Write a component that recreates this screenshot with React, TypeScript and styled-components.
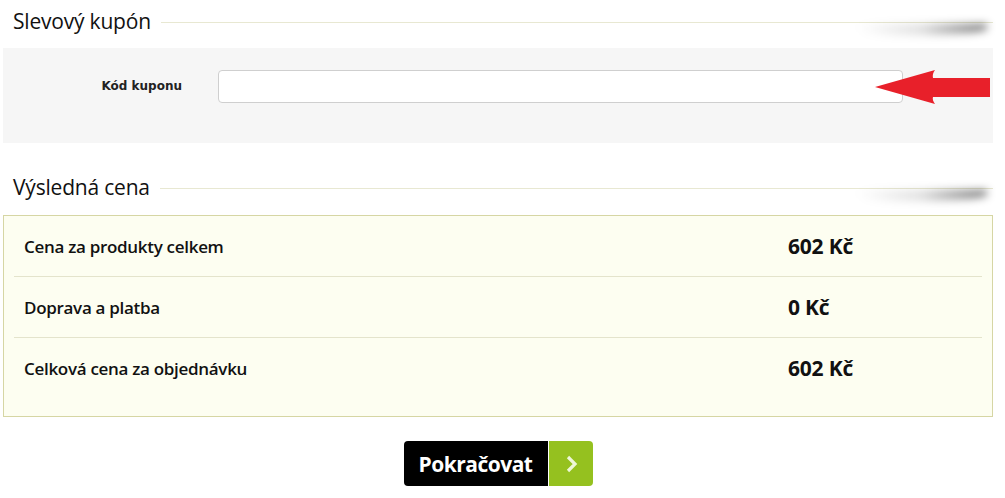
import React, { useState } from 'react'
import styled, { createGlobalStyle } from 'styled-components'

const GlobalStyle = createGlobalStyle`
  body {
    margin: 0;
    background: #ffffff;
    font-family: "Open Sans", "Liberation Sans", sans-serif;
    color: #111;
  }
`

const Wrapper = styled.div`
  width: 990px;
  padding: 0 12px 0 3px;
`

const SectionHead = styled.div<{ $top?: number }>`
  display: flex;
  align-items: center;
  gap: 10px;
  height: 42px;
  padding-left: 10px;
  margin-top: ${({ $top }) => $top || 0}px;
`

const HeadTitle = styled.h2`
  margin: 0;
  font-family: "Open Sans", sans-serif;
  font-weight: 400;
  font-size: 21px;
  letter-spacing: -0.2px;
  color: #111;
  white-space: nowrap;
`

const HeadLine = styled.div`
  position: relative;
  flex: 1;
  height: 1px;
  margin-top: 2px;
  background: #e8e8d2;

  &::after {
    content: '';
    position: absolute;
    right: 6px;
    top: 2px;
    width: 130px;
    height: 11px;
    border-radius: 0 0 60% 40%;
    background: linear-gradient(to right, rgba(0, 0, 0, 0), rgba(0, 0, 0, 0.12) 50%, rgba(0, 0, 0, 0.55));
    filter: blur(4px);
  }
`

const CouponPanel = styled.div`
  position: relative;
  margin-top: 6px;
  height: 95px;
  box-sizing: border-box;
  padding: 22px 90px 0 0;
  background: #f6f6f6;
  display: grid;
  grid-template-columns: 215px 1fr;
  align-items: start;
`

const FieldLabel = styled.label`
  justify-self: end;
  padding-right: 36px;
  line-height: 33px;
  font-family: "DejaVu Sans", Verdana, sans-serif;
  font-weight: 700;
  font-size: 12px;
  color: #222;
`

const CouponInput = styled.input`
  height: 33px;
  box-sizing: border-box;
  border: 1px solid #cfcfcf;
  border-radius: 4px;
  background: #fff;
  outline: 0;
  padding: 0 10px;
  font-size: 14px;
`

const Arrow = styled.svg`
  position: absolute;
  left: 869px;
  top: 22px;
`

const PriceBox = styled.div`
  margin-top: 7px;
  border: 1px solid #d6d6a4;
  background: #fdfef1;
  padding: 0 10px 18px;
`

const PriceRow = styled.div<{ $last?: boolean }>`
  display: grid;
  grid-template-columns: 764px 1fr;
  align-items: center;
  height: 60px;
  padding-left: 10px;
  border-bottom: ${({ $last }) => ($last ? '0' : '1px solid #e4e4cc')};
`

const RowLabel = styled.span`
  font-family: "Open Sans", sans-serif;
  font-weight: 600;
  font-size: 17px;
  letter-spacing: -0.3px;
  color: #111;
`

const RowValue = styled.span`
  font-family: "Open Sans", sans-serif;
  font-weight: 700;
  font-size: 21px;
  letter-spacing: -0.2px;
  color: #111;
`

const Actions = styled.div`
  display: flex;
  justify-content: center;
  margin-top: 24px;
`

const NextButton = styled.button`
  display: flex;
  height: 45px;
  padding: 0;
  border: 0;
  background: none;
  cursor: pointer;
  font-family: inherit;
`

const ButtonText = styled.span`
  display: flex;
  align-items: center;
  justify-content: center;
  width: 144px;
  background: #000;
  color: #fff;
  border-radius: 4px 0 0 4px;
  font-family: "Open Sans", sans-serif;
  font-weight: 700;
  font-size: 21px;
  letter-spacing: -0.5px;
`

const ButtonIcon = styled.span`
  display: flex;
  align-items: center;
  justify-content: center;
  width: 44px;
  margin-left: 1px;
  background: #95c11f;
  border-radius: 0 4px 4px 0;
`

const prices = [
  { label: 'Cena za produkty celkem', value: '602 Kč' },
  { label: 'Doprava a platba', value: '0 Kč' },
  { label: 'Celková cena za objednávku', value: '602 Kč' },
]

const App = () => {
  const [code, setCode] = useState('')

  return (
    <Wrapper>
      <GlobalStyle />
      <SectionHead>
        <HeadTitle>Slevový kupón</HeadTitle>
        <HeadLine />
      </SectionHead>

      <CouponPanel>
        <FieldLabel htmlFor='coupon'>Kód kuponu</FieldLabel>
        <CouponInput id='coupon' value={code} onChange={(e) => setCode(e.target.value)} />
        <Arrow width='118' height='34' viewBox='0 0 118 34'>
          <path d='M3 17 L63 0 Q60 4 61 8 L118 8 L118 27 L61 27 Q60 30 63 34 Z' fill='#e8202a' />
        </Arrow>
      </CouponPanel>

      <SectionHead $top={23}>
        <HeadTitle>Výsledná cena</HeadTitle>
        <HeadLine />
      </SectionHead>

      <PriceBox>
        {prices.map((p, i) => (
          <PriceRow key={p.label} $last={i === prices.length - 1}>
            <RowLabel>{p.label}</RowLabel>
            <RowValue>{p.value}</RowValue>
          </PriceRow>
        ))}
      </PriceBox>

      <Actions>
        <NextButton>
          <ButtonText>Pokračovat</ButtonText>
          <ButtonIcon>
            <svg width='14' height='18' viewBox='0 0 14 18'>
              <polyline points='4,2 11,9 4,16' fill='none' stroke='#eef7d8' strokeWidth='3.2' />
            </svg>
          </ButtonIcon>
        </NextButton>
      </Actions>
    </Wrapper>
  )
}

export default App
